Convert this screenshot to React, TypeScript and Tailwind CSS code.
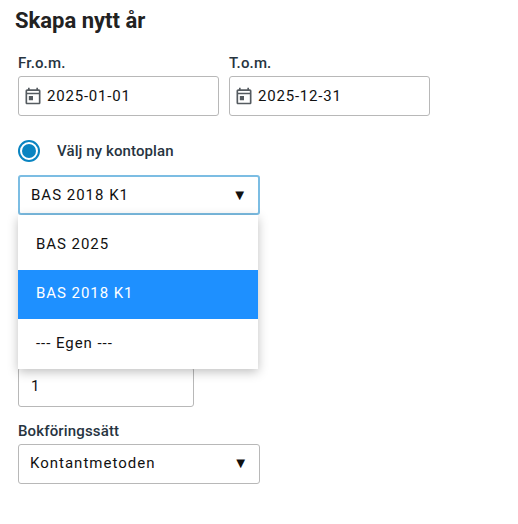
import { useState } from 'react';

const options = ['BAS 2025', 'BAS 2018 K1', '--- Egen ---'];

const CalendarIcon = () => (
  <svg className="w-[20px] h-[20px] text-[#555b60] shrink-0" fill="currentColor" viewBox="0 0 24 24">
    <path d="M19 4h-1V2h-2v2H8V2H6v2H5c-1.1 0-2 .9-2 2v14c0 1.1.9 2 2 2h14c1.1 0 2-.9 2-2V6c0-1.1-.9-2-2-2zm0 16H5V10h14v10zm0-12H5V6h14v2zM7 12h5v5H7z" />
  </svg>
);

const DateField = ({ label, value }: { label: string; value: string }) => (
  <div className="w-[201px]">
    <div className="text-[15px] leading-[18px] font-medium text-[#27343f] tracking-[0.15px] mb-[4px]">{label}</div>
    <div className="h-[40px] flex items-center gap-[4px] pl-[4px] border border-[#b8b8b8] rounded-[3px] bg-white">
      <CalendarIcon />
      <span className="text-[15px] tracking-[0.8px] text-[#111]">{value}</span>
    </div>
  </div>
);

const Caret = () => <span className="text-[15px] leading-none text-[#111]">▼</span>;

export default function App() {
  const [selected] = useState('BAS 2018 K1');

  return (
    <div className="w-[518px] h-[524px] bg-white pt-[9px] pl-[18px] font-['Roboto',sans-serif]">
      <h1 className="-ml-[3px] text-[22px] leading-[24px] font-bold text-[#222]">Skapa nytt år</h1>

      <div className="flex gap-[10px] mt-[21px]">
        <DateField label="Fr.o.m." value="2025-01-01" />
        <DateField label="T.o.m." value="2025-12-31" />
      </div>

      <div className="flex items-center mt-[23px] h-[24px]">
        <span className="w-[22px] h-[22px] rounded-full border-[2px] border-[#0a84c1] flex items-center justify-center">
          <span className="w-[14px] h-[14px] rounded-full bg-[#0a84c1]" />
        </span>
        <span className="ml-[17px] text-[15px] font-medium text-[#27343f] tracking-[0.1px]">Välj ny kontoplan</span>
      </div>

      <div className="relative w-[242px] mt-[12px]">
        <div className="h-[40px] flex items-center justify-between pl-[11px] pr-[11px] border-[2px] border-[#7cbde3] rounded-[3px] bg-white">
          <span className="text-[15px] tracking-[1px] text-[#111]">{selected}</span>
          <Caret />
        </div>
        <ul className="absolute top-[40px] left-0 w-[240px] pt-[5px] bg-white shadow-[0_3px_10px_rgba(0,0,0,0.25)] z-10">
          {options.map(o => (
            <li
              key={o}
              className={`h-[49.5px] flex items-center pl-[18px] pb-[2px] text-[15px] tracking-[0.95px] ${
                o === selected ? 'bg-[#1e90ff] text-white' : 'text-[#111]'
              }`}
            >
              {o}
            </li>
          ))}
        </ul>
      </div>

      <div className="mt-[152px] w-[176px] h-[40px] flex items-center pl-[12px] pb-[2px] border border-[#b8b8b8] rounded-[3px] bg-white">
        <span className="text-[15px] text-[#111]">1</span>
      </div>

      <div className="mt-[15px] text-[15px] leading-[18px] font-medium text-[#27343f] tracking-[0.15px] mb-[4px]">Bokföringssätt</div>
      <div className="w-[242px] h-[40px] flex items-center justify-between pl-[11px] pr-[11px] pb-[2px] border border-[#b8b8b8] rounded-[3px] bg-white">
        <span className="text-[15px] tracking-[1px] text-[#111]">Kontantmetoden</span>
        <Caret />
      </div>
    </div>
  );
}
